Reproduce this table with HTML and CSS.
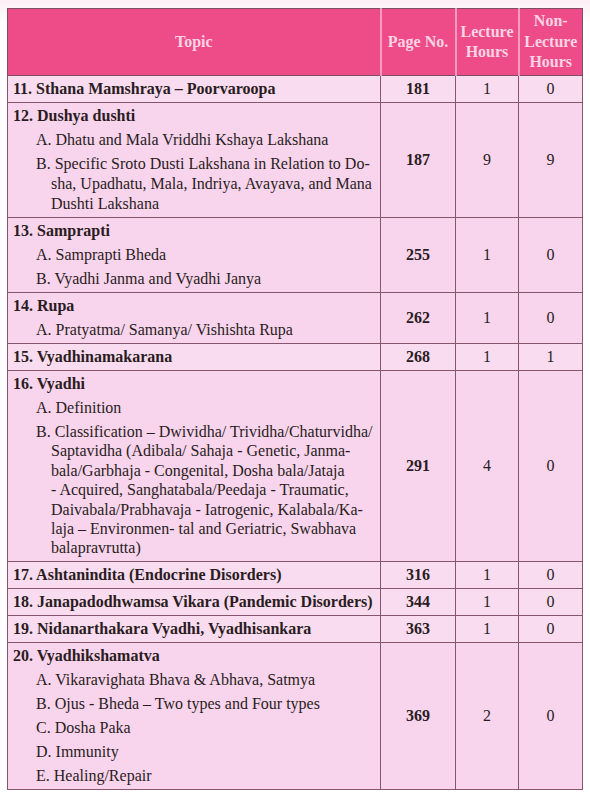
FILE: index.html
```html
<!DOCTYPE html>
<html>
<head>
<meta charset="utf-8">
<link rel="stylesheet" href="styles.css">
</head>
<body>
<table class="syllabus">
  <colgroup>
    <col class="c-topic"><col class="c-page"><col class="c-lec"><col class="c-non">
  </colgroup>
  <thead>
    <tr>
      <th>Topic</th>
      <th>Page No.</th>
      <th>Lecture<br>Hours</th>
      <th>Non-<br>Lecture<br>Hours</th>
    </tr>
  </thead>
  <tbody>
    <tr class="single">
      <td class="topic"><p class="title">11. Sthana Mamshraya – Poorvaroopa</p></td>
      <td class="page">181</td><td class="num">1</td><td class="num">0</td>
    </tr>
    <tr>
      <td class="topic">
        <p class="title">12. Dushya dushti</p>
        <p class="sub">A. Dhatu and Mala Vriddhi Kshaya Lakshana</p>
        <p class="sub">B. Specific Sroto Dusti Lakshana in Relation to Do-<br>sha, Upadhatu, Mala, Indriya, Avayava, and Mana<br>Dushti Lakshana</p>
      </td>
      <td class="page">187</td><td class="num">9</td><td class="num">9</td>
    </tr>
    <tr>
      <td class="topic">
        <p class="title">13. Samprapti</p>
        <p class="sub">A. Samprapti Bheda</p>
        <p class="sub">B. Vyadhi Janma and Vyadhi Janya</p>
      </td>
      <td class="page">255</td><td class="num">1</td><td class="num">0</td>
    </tr>
    <tr>
      <td class="topic">
        <p class="title">14. Rupa</p>
        <p class="sub">A. Pratyatma/ Samanya/ Vishishta Rupa</p>
      </td>
      <td class="page">262</td><td class="num">1</td><td class="num">0</td>
    </tr>
    <tr class="single">
      <td class="topic"><p class="title">15. Vyadhinamakarana</p></td>
      <td class="page">268</td><td class="num">1</td><td class="num">1</td>
    </tr>
    <tr>
      <td class="topic">
        <p class="title">16. Vyadhi</p>
        <p class="sub">A. Definition</p>
        <p class="sub tight">B. Classification – Dwividha/ Trividha/Chaturvidha/<br>Saptavidha (Adibala/ Sahaja - Genetic, Janma-<br>bala/Garbhaja - Congenital, Dosha bala/Jataja<br>- Acquired, Sanghatabala/Peedaja - Traumatic,<br>Daivabala/Prabhavaja - Iatrogenic, Kalabala/Ka-<br>laja – Environmen- tal and Geriatric, Swabhava<br>balapravrutta)</p>
      </td>
      <td class="page">291</td><td class="num">4</td><td class="num">0</td>
    </tr>
    <tr class="single">
      <td class="topic"><p class="title">17. Ashtanindita (Endocrine Disorders)</p></td>
      <td class="page">316</td><td class="num">1</td><td class="num">0</td>
    </tr>
    <tr class="single">
      <td class="topic"><p class="title">18. Janapadodhwamsa Vikara (Pandemic Disorders)</p></td>
      <td class="page">344</td><td class="num">1</td><td class="num">0</td>
    </tr>
    <tr class="single">
      <td class="topic"><p class="title">19. Nidanarthakara Vyadhi, Vyadhisankara</p></td>
      <td class="page">363</td><td class="num">1</td><td class="num">0</td>
    </tr>
    <tr>
      <td class="topic">
        <p class="title">20. Vyadhikshamatva</p>
        <p class="sub">A. Vikaravighata Bhava &amp; Abhava, Satmya</p>
        <p class="sub">B. Ojus - Bheda – Two types and Four types</p>
        <p class="sub">C. Dosha Paka</p>
        <p class="sub">D. Immunity</p>
        <p class="sub">E. Healing/Repair</p>
      </td>
      <td class="page">369</td><td class="num">2</td><td class="num">0</td>
    </tr>
  </tbody>
</table>
</body>
</html>
```
FILE: styles.css
```css
html, body {
  margin: 0;
  padding: 0;
}
body {
  background: linear-gradient(#fbeef4 0, #ffffff 24px);
  font-family: "Liberation Serif", Tinos, "Times New Roman", "DejaVu Serif", serif;
  color: #2a1c22;
  padding: 8px 0 0 7px;
  width: 590px;
  height: 799px;
  box-sizing: border-box;
}
.syllabus {
  border-collapse: collapse;
  table-layout: fixed;
  width: 575px;
  font-family: "Liberation Serif", Tinos, "Times New Roman", "DejaVu Serif", serif;
  font-size: 16px;
  border: 1px solid #7d4d63;
}
.c-topic { width: 373px; }
.c-page { width: 75px; }
.c-lec { width: 63px; }
.c-non { width: 64px; }

.syllabus thead th {
  background: #ee4c88;
  color: #fbd3e3;
  font-weight: bold;
  line-height: 20.5px;
  height: 66px;
  padding: 0;
  text-align: center;
  vertical-align: middle;
  border-left: 2px solid #f59cc0;
  border-bottom: 1px solid #7d4d63;
}
.syllabus thead th:first-child {
  border-left: 0;
}
.syllabus tbody td {
  background: #f8d5ec;
  border: 1px solid #85566c;
  vertical-align: middle;
  text-align: center;
  line-height: 20px;
  padding: 3px 0;
}
.syllabus tbody tr.single td {
  background: #f9dcef;
}
.syllabus tbody td.topic {
  text-align: left;
  padding: 3px 4px 3px 5px;
}
.page {
  font-weight: bold;
}
.title {
  margin: 0;
  font-weight: bold;
}
.sub {
  margin: 4px 0 0 0;
  padding-left: 38px;
  text-indent: -15px;
  white-space: nowrap;
}
.sub.tight {
  line-height: 19.4px;
}
```
